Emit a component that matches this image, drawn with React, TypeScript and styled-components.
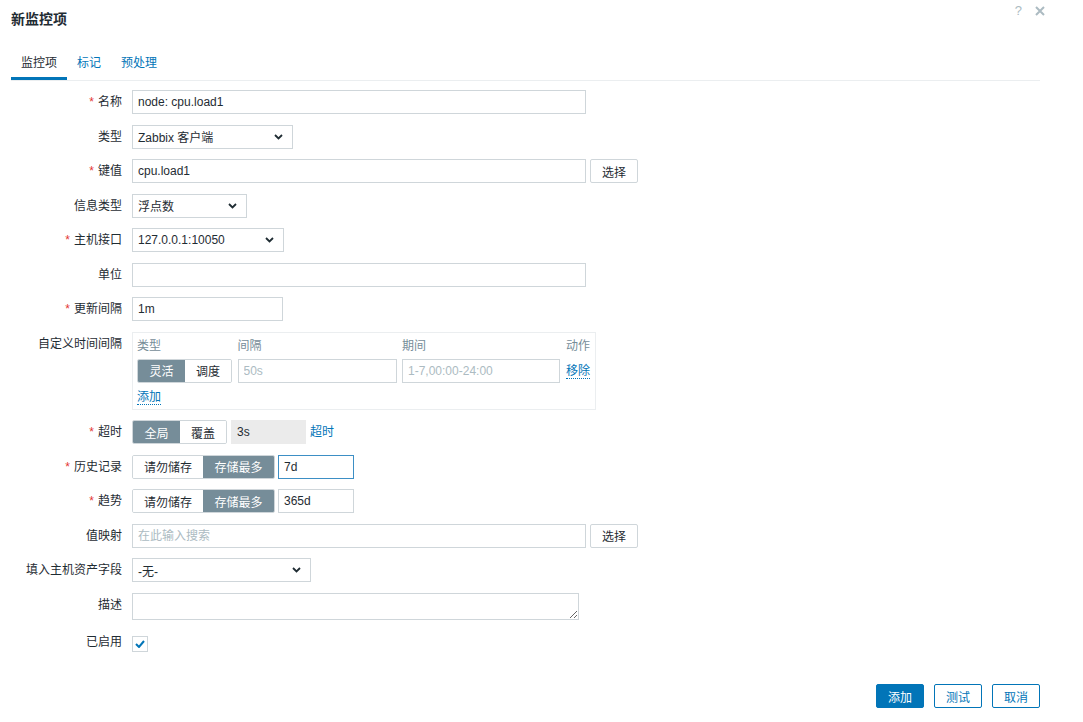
import React from "react";
import styled, { createGlobalStyle, css } from "styled-components";

const GlobalStyle = createGlobalStyle`
  html, body {
    margin: 0;
    padding: 0;
    background: #fff;
  }
  body {
    font-family: "Liberation Sans", Arial, "Noto Sans CJK SC", sans-serif;
    font-size: 12px;
    color: #1f2c33;
  }
  * { box-sizing: border-box; }
`;

const Dialog = styled.div`
  width: 1083px;
  height: 722px;
  padding: 0 43px 0 11px;
  position: relative;
`;

const Header = styled.div`
  height: 36px;
  display: flex;
  align-items: center;
`;

const Title = styled.h4`
  margin: 0;
  font-size: 14px;
  font-weight: bold;
  color: #1f2c33;
`;

const HeaderIcons = styled.div`
  position: absolute;
  top: 3px;
  right: 38px;
  display: flex;
  align-items: center;
  gap: 13px;
  color: #acbbc2;
  font-size: 13px;
`;

const Tabs = styled.div`
  margin-top: 11px;
  display: flex;
  border-bottom: 1px solid #ebeef0;
`;

const Tab = styled.div<{ $active?: boolean }>`
  padding: 2px 10px 0;
  height: 33px;
  line-height: 28px;
  border-bottom: 3px solid transparent;
  color: #0275b8;
  ${(p) =>
    p.$active &&
    css`
      color: #1f2c33;
      border-bottom-color: #0275b8;
    `}
`;

const Form = styled.div`
  margin-top: 9px;
  display: grid;
  grid-template-columns: 111px auto;
  column-gap: 10px;
  row-gap: 10.5px;
  align-items: start;
`;

const Label = styled.label`
  text-align: right;
  line-height: 24px;
  white-space: nowrap;
`;

const Req = styled.span`
  color: #e33734;
  margin-right: 4px;
`;

const Field = styled.div<{ $gap?: number }>`
  display: flex;
  align-items: center;
  gap: ${(p) => p.$gap ?? 4}px;
  min-height: 24px;
`;

const Input = styled.input<{ $w: number; $focus?: boolean }>`
  width: ${(p) => p.$w}px;
  height: 24px;
  padding: 0 5px;
  border: 1px solid #cfd6da;
  background: #fff;
  font: inherit;
  color: #1f2c33;
  outline: none;
  &::placeholder { color: #acbbc2; }
  &:disabled {
    background: #ebebeb;
    border-color: #ebebeb;
    color: #1f2c33;
  }
  ${(p) => p.$focus && css`border-color: #3d8fc5;`}
`;

const TextArea = styled.textarea`
  width: 447px;
  height: 27px;
  border: 1px solid #cfd6da;
  padding: 3px 5px;
  font: inherit;
  resize: vertical;
  outline: none;
  display: block;
`;

const SelectBox = styled.div<{ $w: number }>`
  width: ${(p) => p.$w}px;
  height: 24px;
  padding: 0 9px 0 5px;
  border: 1px solid #cfd6da;
  display: flex;
  align-items: center;
  justify-content: space-between;
  background: #fff;
`;

const Button = styled.button<{ $w?: number; $variant?: "plain" | "primary" | "outline" }>`
  width: ${(p) => p.$w ?? 48}px;
  height: 24px;
  font: inherit;
  border-radius: 2px;
  cursor: pointer;
  padding: 0;
  ${(p) =>
    p.$variant === "primary"
      ? css`
          background: #0275b8;
          border: 1px solid #0275b8;
          color: #fff;
        `
      : p.$variant === "outline"
      ? css`
          background: #fff;
          border: 1px solid #0275b8;
          color: #0275b8;
        `
      : css`
          background: #fff;
          border: 1px solid #cfd6da;
          color: #1f2c33;
        `}
`;

const Segmented = styled.div`
  display: flex;
  border: 1px solid #cfd6da;
  border-radius: 2px;
  overflow: hidden;
  height: 24px;
`;

const Seg = styled.div<{ $w: number; $active?: boolean }>`
  width: ${(p) => p.$w}px;
  display: flex;
  align-items: center;
  justify-content: center;
  background: ${(p) => (p.$active ? "#768d99" : "#fff")};
  color: ${(p) => (p.$active ? "#fff" : "#1f2c33")};
`;

const Link = styled.span<{ $dotted?: boolean }>`
  color: #0275b8;
  cursor: pointer;
  line-height: 16px;
  white-space: nowrap;
  ${(p) => p.$dotted && css`border-bottom: 1px dotted #0275b8;`}
`;

const IntervalBox = styled.div`
  width: 464px;
  border: 1px solid #ebeef0;
  padding: 4px 5px 3px 4px;
`;

const IntervalGrid = styled.div`
  display: grid;
  grid-template-columns: 95px 159px 158px 1fr;
  column-gap: 5.5px;
  row-gap: 4px;
  align-items: center;
`;

const ColHead = styled.div<{ $right?: boolean }>`
  color: #768d99;
  line-height: 18px;
  white-space: nowrap;
  ${(p) => p.$right && css`text-align: right;`}
`;

const ActionCell = styled.div`
  text-align: right;
  white-space: nowrap;
`;

const AddRow = styled.div`
  margin-top: 5px;
  line-height: 18px;
`;

const Check = styled.div`
  width: 16px;
  height: 16px;
  border: 1px solid #cfd6da;
  display: flex;
  align-items: center;
  justify-content: center;
  margin-top: 4px;
`;

const Footer = styled.div`
  position: absolute;
  right: 43px;
  top: 684px;
  display: flex;
  gap: 10px;
`;

const Chevron = () => (
  <svg width="9" height="6" viewBox="0 0 9 6">
    <path d="M1 1 L4.5 4.5 L8 1" fill="none" stroke="#1f2c33" strokeWidth="1.8" />
  </svg>
);

function Select({ w, value }: { w: number; value: string }) {
  return (
    <SelectBox $w={w}>
      <span>{value}</span>
      <Chevron />
    </SelectBox>
  );
}

function FieldLabel({ text, required }: { text: string; required?: boolean }) {
  return (
    <Label>
      {required && <Req>*</Req>}
      {text}
    </Label>
  );
}

export default function App() {
  return (
    <Dialog>
      <GlobalStyle />
      <Header>
        <Title>新监控项</Title>
      </Header>
      <HeaderIcons>
        <span>?</span>
        <svg width="10" height="10" viewBox="0 0 10 10">
          <path d="M1 1 L9 9 M9 1 L1 9" stroke="#acbbc2" strokeWidth="2" />
        </svg>
      </HeaderIcons>

      <Tabs>
        <Tab $active>监控项</Tab>
        <Tab>标记</Tab>
        <Tab>预处理</Tab>
      </Tabs>

      <Form>
        <FieldLabel text="名称" required />
        <Field>
          <Input $w={454} defaultValue="node: cpu.load1" />
        </Field>

        <FieldLabel text="类型" />
        <Field>
          <Select w={161} value="Zabbix 客户端" />
        </Field>

        <FieldLabel text="键值" required />
        <Field>
          <Input $w={454} defaultValue="cpu.load1" />
          <Button $w={48}>选择</Button>
        </Field>

        <FieldLabel text="信息类型" />
        <Field>
          <Select w={115} value="浮点数" />
        </Field>

        <FieldLabel text="主机接口" required />
        <Field>
          <Select w={152} value="127.0.0.1:10050" />
        </Field>

        <FieldLabel text="单位" />
        <Field>
          <Input $w={454} />
        </Field>

        <FieldLabel text="更新间隔" required />
        <Field>
          <Input $w={151} defaultValue="1m" />
        </Field>

        <FieldLabel text="自定义时间间隔" />
        <IntervalBox>
          <IntervalGrid>
            <ColHead>类型</ColHead>
            <ColHead>间隔</ColHead>
            <ColHead>期间</ColHead>
            <ColHead $right>动作</ColHead>
            <Segmented>
              <Seg $w={47} $active>灵活</Seg>
              <Seg $w={46}>调度</Seg>
            </Segmented>
            <Input $w={159} placeholder="50s" />
            <Input $w={158} placeholder="1-7,00:00-24:00" />
            <ActionCell>
              <Link $dotted>移除</Link>
            </ActionCell>
          </IntervalGrid>
          <AddRow>
            <Link $dotted>添加</Link>
          </AddRow>
        </IntervalBox>

        <FieldLabel text="超时" required />
        <Field>
          <Segmented>
            <Seg $w={47} $active>全局</Seg>
            <Seg $w={46}>覆盖</Seg>
          </Segmented>
          <Input $w={75} defaultValue="3s" disabled />
          <Link>超时</Link>
        </Field>

        <FieldLabel text="历史记录" required />
        <Field $gap={3}>
          <Segmented>
            <Seg $w={70}>请勿储存</Seg>
            <Seg $w={71} $active>存储最多</Seg>
          </Segmented>
          <Input $w={76} defaultValue="7d" $focus />
        </Field>

        <FieldLabel text="趋势" required />
        <Field $gap={3}>
          <Segmented>
            <Seg $w={70}>请勿储存</Seg>
            <Seg $w={71} $active>存储最多</Seg>
          </Segmented>
          <Input $w={76} defaultValue="365d" />
        </Field>

        <FieldLabel text="值映射" />
        <Field>
          <Input $w={454} placeholder="在此输入搜索" />
          <Button $w={48}>选择</Button>
        </Field>

        <FieldLabel text="填入主机资产字段" />
        <Field>
          <Select w={179} value="-无-" />
        </Field>

        <FieldLabel text="描述" />
        <Field>
          <TextArea />
        </Field>

        <FieldLabel text="已启用" />
        <Field>
          <Check>
            <svg width="10" height="8" viewBox="0 0 10 8">
              <path d="M1 4 L4 7 L9 1" fill="none" stroke="#0275b8" strokeWidth="2" />
            </svg>
          </Check>
        </Field>
      </Form>

      <Footer>
        <Button $variant="primary">添加</Button>
        <Button $variant="outline">测试</Button>
        <Button $variant="outline">取消</Button>
      </Footer>
    </Dialog>
  );
}
